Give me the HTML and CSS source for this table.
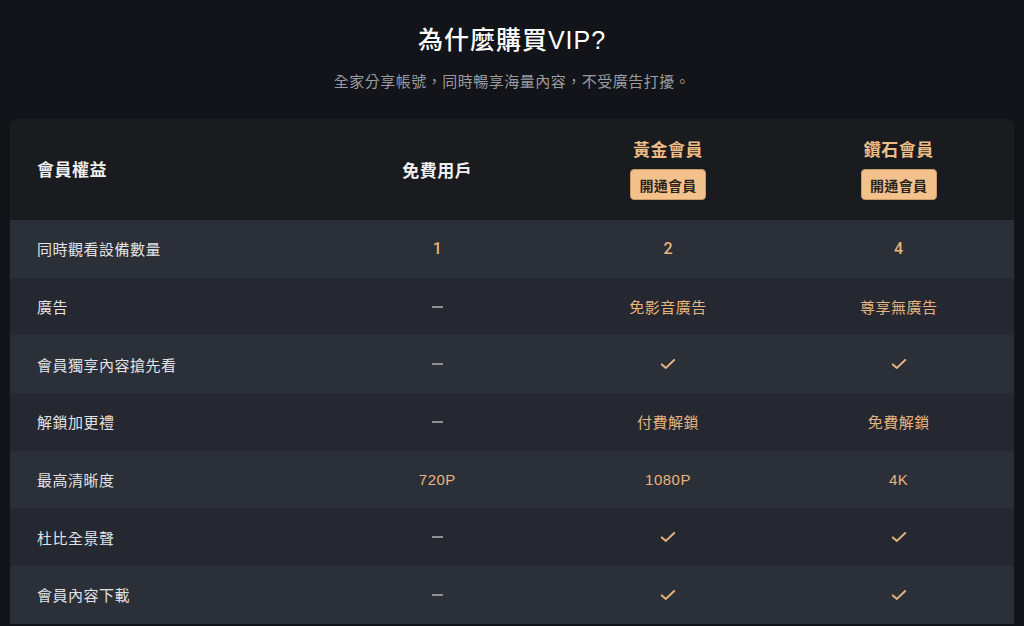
FILE: index.html
```html
<!DOCTYPE html>
<html lang="zh-Hant">
<head>
<meta charset="utf-8">
<link rel="stylesheet" href="styles.css">
</head>
<body>
<section class="vip">
  <header class="intro">
    <h1 class="title">為什麼購買VIP?</h1>
    <p class="subtitle">全家分享帳號，同時暢享海量內容，不受廣告打擾。</p>
  </header>
  <div class="table">
    <div class="row head">
      <div class="cell label">會員權益</div>
      <div class="cell"><span class="plan">免費用戶</span></div>
      <div class="cell plan-col"><span class="plan gold">黃金會員</span><button class="btn">開通會員</button></div>
      <div class="cell plan-col"><span class="plan gold">鑽石會員</span><button class="btn">開通會員</button></div>
    </div>
    <div class="row odd">
      <div class="cell label">同時觀看設備數量</div>
      <div class="cell val num">1</div>
      <div class="cell val num">2</div>
      <div class="cell val num">4</div>
    </div>
    <div class="row even">
      <div class="cell label">廣告</div>
      <div class="cell"><span class="dash"></span></div>
      <div class="cell val">免影音廣告</div>
      <div class="cell val">尊享無廣告</div>
    </div>
    <div class="row odd">
      <div class="cell label">會員獨享內容搶先看</div>
      <div class="cell"><span class="dash"></span></div>
      <div class="cell"><svg class="check" viewBox="0 0 16 12"><path d="M1.8 6.4 L5.9 9.9 L14.2 2"/></svg></div>
      <div class="cell"><svg class="check" viewBox="0 0 16 12"><path d="M1.8 6.4 L5.9 9.9 L14.2 2"/></svg></div>
    </div>
    <div class="row even">
      <div class="cell label">解鎖加更禮</div>
      <div class="cell"><span class="dash"></span></div>
      <div class="cell val">付費解鎖</div>
      <div class="cell val">免費解鎖</div>
    </div>
    <div class="row odd">
      <div class="cell label">最高清晰度</div>
      <div class="cell val">720P</div>
      <div class="cell val">1080P</div>
      <div class="cell val">4K</div>
    </div>
    <div class="row even">
      <div class="cell label">杜比全景聲</div>
      <div class="cell"><span class="dash"></span></div>
      <div class="cell"><svg class="check" viewBox="0 0 16 12"><path d="M1.8 6.4 L5.9 9.9 L14.2 2"/></svg></div>
      <div class="cell"><svg class="check" viewBox="0 0 16 12"><path d="M1.8 6.4 L5.9 9.9 L14.2 2"/></svg></div>
    </div>
    <div class="row odd">
      <div class="cell label">會員內容下載</div>
      <div class="cell"><span class="dash"></span></div>
      <div class="cell"><svg class="check" viewBox="0 0 16 12"><path d="M1.8 6.4 L5.9 9.9 L14.2 2"/></svg></div>
      <div class="cell"><svg class="check" viewBox="0 0 16 12"><path d="M1.8 6.4 L5.9 9.9 L14.2 2"/></svg></div>
    </div>
  </div>
</section>
</body>
</html>
```

FILE: styles.css
```css
* { box-sizing: border-box; }
html, body {
  margin: 0;
  padding: 0;
  background: #131419;
  font-family: "Liberation Sans", "Noto Sans CJK TC", sans-serif;
  color: #e6e6e6;
}
.vip {
  padding: 0 10px;
}
.intro {
  text-align: center;
  padding-top: 20px;
  height: 119px;
}
.title {
  margin: 0;
  font-size: 25px;
  line-height: 40px;
  font-weight: 500;
  letter-spacing: 1px;
  color: #ffffff;
}
.subtitle {
  margin: 12px 0 0;
  font-size: 15px;
  line-height: 20px;
  letter-spacing: 0.5px;
  color: #9b9ca0;
}
.table {
  border-radius: 6px 6px 0 0;
  overflow: hidden;
}
.row {
  display: grid;
  grid-template-columns: 312px 1fr 1fr 1fr;
  height: 57.7px;
  align-items: center;
}
.row.head {
  height: 101px;
  background: #1a1b1f;
}
.row.odd { background: #2b2f38; }
.row.even { background: #252830; }
.cell {
  display: flex;
  justify-content: center;
  align-items: center;
  font-size: 15px;
  letter-spacing: 0.5px;
}
.cell.label {
  justify-content: flex-start;
  padding-left: 27px;
  color: #e2e2e4;
}
.row.head .cell.label {
  padding-bottom: 3px;
}
.row.head .cell.label,
.plan {
  font-size: 17px;
  font-weight: 700;
  letter-spacing: 0.5px;
  color: #f0f0f0;
}
.plan-col {
  flex-direction: column;
  gap: 8px;
  padding-bottom: 3px;
}
.plan.gold { color: #ecbc86; }
.btn {
  font-family: inherit;
  border: 1px solid #c99a66;
  background: #f3c28c;
  color: #2a241d;
  font-size: 14px;
  font-weight: 700;
  letter-spacing: 0.3px;
  width: 76px;
  height: 31px;
  border-radius: 4px;
  padding: 0;
  cursor: pointer;
}
.val {
  color: #e7b47e;
}
.val.num {
  font-family: Roboto, "Liberation Sans", sans-serif;
  font-size: 16px;
  font-weight: 500;
  letter-spacing: 0;
}
.dash {
  display: block;
  width: 11px;
  height: 2px;
  background: #8d8f94;
}
.check {
  width: 16px;
  height: 12px;
  fill: none;
  stroke: #e7b47e;
  stroke-width: 2;
  stroke-linecap: round;
  stroke-linejoin: round;
}
```
